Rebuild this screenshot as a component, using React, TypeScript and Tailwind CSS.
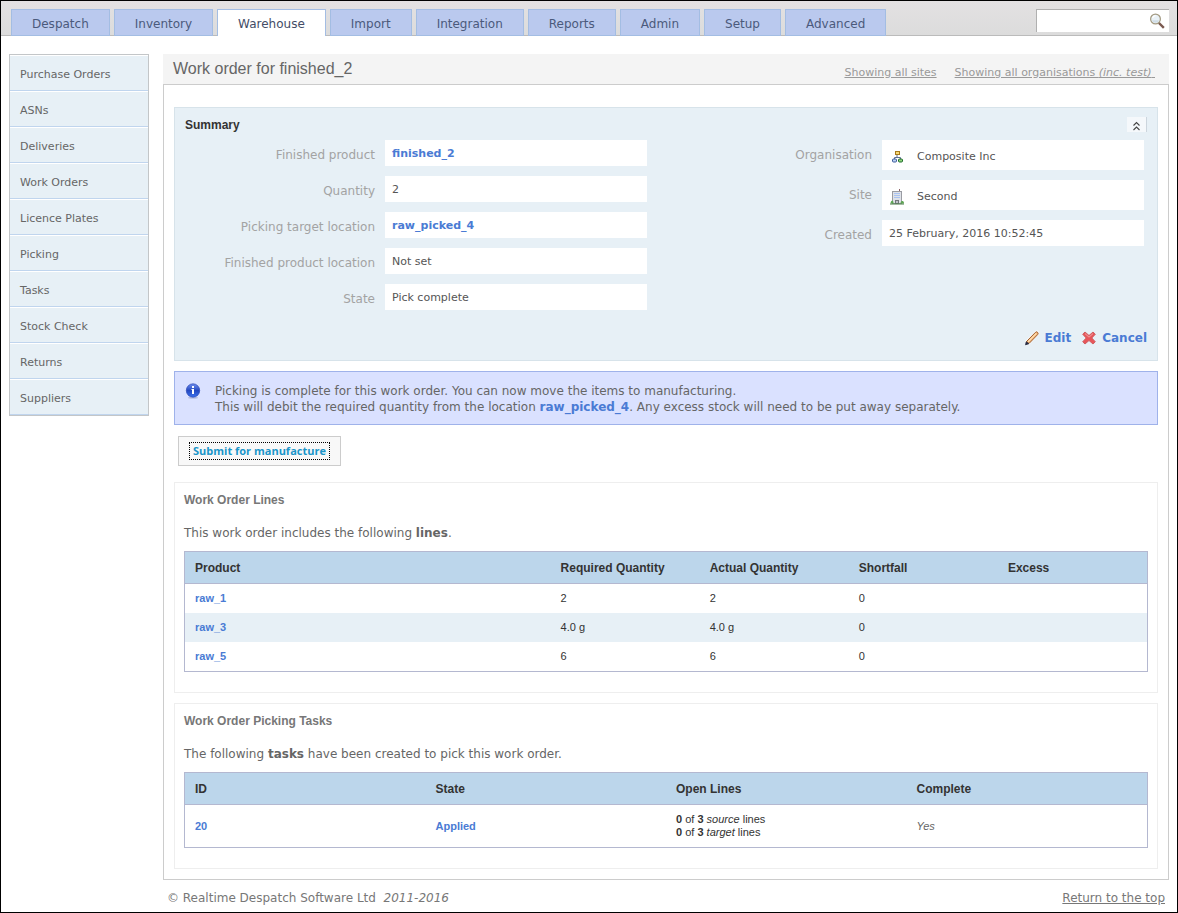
import type { ReactNode } from "react";

const tabs = [
  "Despatch",
  "Inventory",
  "Warehouse",
  "Import",
  "Integration",
  "Reports",
  "Admin",
  "Setup",
  "Advanced",
];

const menu = [
  "Purchase Orders",
  "ASNs",
  "Deliveries",
  "Work Orders",
  "Licence Plates",
  "Picking",
  "Tasks",
  "Stock Check",
  "Returns",
  "Suppliers",
];

const lines = [
  { product: "raw_1", required: "2", actual: "2", shortfall: "0", excess: "" },
  { product: "raw_3", required: "4.0 g", actual: "4.0 g", shortfall: "0", excess: "" },
  { product: "raw_5", required: "6", actual: "6", shortfall: "0", excess: "" },
];

function SearchIcon() {
  return (
    <svg width="16" height="16" viewBox="0 0 16 16" aria-hidden="true">
      <path d="M10.500 10.500l3.500 3.500" stroke="#7b5a50" strokeWidth="2.4" strokeLinecap="square" />
      <circle cx="6.500" cy="6" r="4.900" fill="#e9f1f6" stroke="#a39a82" strokeWidth="1.2" />
      <path d="M3 7.200a3.700 3.700 0 0 0 7 0z" fill="#cfdde6" />
      <path d="M3.600 5a3.200 3.200 0 0 1 3-2.300" fill="none" stroke="#fff" strokeWidth="1.2" />
    </svg>
  );
}

function CollapseIcon() {
  return (
    <svg width="9" height="10" viewBox="0 0 9 10" fill="none" stroke="#444" aria-hidden="true">
      <path d="M1.500 4.500l3-3 3 3M1.500 9l3-3 3 3" strokeWidth="1.1" />
    </svg>
  );
}

function OrganisationIcon() {
  return (
    <svg width="16" height="16" viewBox="0 0 16 16" aria-hidden="true">
      <path d="M8 6v3M5.500 11V8.500h6V11" fill="none" stroke="#5d6f92" />
      <rect x="6.500" y="2.500" width="4" height="3" fill="#f6d976" stroke="#a87a1c" />
      <rect x="3.500" y="10" width="4" height="3" rx="1" fill="#bcd0f2" stroke="#3c5c9c" />
      <rect x="9.500" y="10" width="4" height="3" rx="1" fill="#8fd67c" stroke="#1f6b2c" />
    </svg>
  );
}

function SiteIcon() {
  return (
    <svg width="16" height="16" viewBox="0 0 16 16" aria-hidden="true">
      <path d="M10.500 0v3" stroke="#8d6266" />
      <rect x="3.500" y="2.500" width="9" height="12" fill="#dfe2e8" stroke="#9a9ca3" />
      <path d="M5 4.500h6M5 6.500h6M5 8.500h6" stroke="#a9c3f2" />
      <rect x="6.500" y="11.500" width="3" height="3" fill="#bfc2c8" stroke="#74767c" />
      <path d="M1.500 14.500c0-2 1-3 2-3 1 1 1 2 1 3zM11.500 14.500c0-2 1-2.500 2-2.500s1.500 1 1.500 2.500z" fill="#5da653" />
      <path d="M1 15h14" stroke="#4b7d48" />
    </svg>
  );
}

function EditIcon() {
  return (
    <svg width="16" height="16" viewBox="0 0 16 16" aria-hidden="true">
      <path d="M1 15.300V11.500L11.500 1Q13 0 14.500 1.500T15 4.500L5 14.800z" fill="#fff" />
      <path d="M2.500 11.500L11.500 2.300Q12.600 1.200 13.600 2.300T13.700 4.600L5 13.500z" fill="#f3b678" stroke="#9a5a2c" />
      <path d="M4 11.800L12.300 3.400" stroke="#ffe0b5" strokeWidth="1.2" />
      <path d="M2.200 11.800L4.800 13.800 1.500 14.800z" fill="#2a2f4a" stroke="#23283f" strokeWidth=".8" />
    </svg>
  );
}

function CancelIcon() {
  return (
    <svg width="16" height="16" viewBox="0 0 16 16" aria-hidden="true">
      <path
        d="M4 2L8 5.500 12 2 14.300 4.200 10.800 8 14.300 11.800 12 14 8 10.500 4 14 1.700 11.800 5.200 8 1.700 4.200z"
        fill="#e8555a"
        stroke="#cf5f61"
        strokeLinejoin="round"
      />
      <path d="M4 3.600L8 7.200 12 3.600" fill="none" stroke="#f3a0a1" />
    </svg>
  );
}

function InfoIcon() {
  return (
    <svg width="16" height="16" viewBox="0 0 16 16" className="shrink-0" aria-hidden="true">
      <defs>
        <linearGradient id="info" x1="0" y1="0" x2="0" y2="1">
          <stop offset="0" stopColor="#6f8ff0" />
          <stop offset=".5" stopColor="#2448c0" />
          <stop offset="1" stopColor="#3c72ee" />
        </linearGradient>
      </defs>
      <ellipse cx="8" cy="14.800" rx="5" ry="1" fill="#b7bfe0" />
      <circle cx="8" cy="7.500" r="6.700" fill="url(#info)" stroke="#2c48b4" strokeWidth=".7" />
      <path d="M7 3h2v2H7zM6.500 6H9v5H7V7h-.5z" fill="#fff" />
    </svg>
  );
}

function TextLink({ children }: { children: ReactNode }) {
  return (
    <a href="#" className="font-bold text-[#4a7bd4]">
      {children}
    </a>
  );
}

function Field({ label, icon, children }: { label: string; icon?: ReactNode; children: ReactNode }) {
  return (
    <div className="flex gap-[10px]">
      <dt className="w-[190px] pt-[7px] text-right text-[12px] leading-[17px] text-[#a3a3a3]">{label}</dt>
      <dd
        className={
          icon
            ? "flex h-[30px] w-[262px] items-center gap-3 bg-white px-[7px] pt-1 text-[11px] text-[#555]"
            : "flex h-[26px] w-[262px] items-center bg-white px-[7px] pt-[3px] text-[11px] text-[#555]"
        }
      >
        {icon}
        <span>{children}</span>
      </dd>
    </div>
  );
}

function Section({ title, children }: { title: string; children: ReactNode }) {
  return (
    <section className="border border-[#eee] px-[9px] pb-5">
      <h2 className="pt-[9px] font-['Liberation_Sans'] text-[12px] leading-4 font-bold text-[#777]">{title}</h2>
      {children}
    </section>
  );
}

function HeadCell({ children, className }: { children: ReactNode; className?: string }) {
  return (
    <th
      scope="col"
      className={`h-8 border-b border-[#b4b8d0] px-[10px] text-left text-[12px] font-bold ${className ?? ""}`}
    >
      {children}
    </th>
  );
}

export default function App() {
  return (
    <div
      id="top"
      className="min-h-screen border border-black bg-white font-['DejaVu_Sans',sans-serif] text-[12px] text-[#666]"
    >
      <header className="flex h-[35px] items-start justify-between border-b border-[#bbb] bg-linear-to-b from-[#e3e1e2] to-[#dcdcdc] pt-2 pr-2 pl-[10px]">
        <nav className="flex gap-1">
          {tabs.map((tab) => (
            <a
              key={tab}
              href="#"
              className={
                tab === "Warehouse"
                  ? "h-[27px] border border-b-0 border-[#a3bde3] bg-white px-5 pt-[6px] leading-4 text-[#444c66]"
                  : "h-[27px] border border-[#a3bde3] bg-[#bac9ee] px-5 pt-[6px] leading-4 text-[#4b5a7c]"
              }
            >
              {tab}
            </a>
          ))}
        </nav>
        <form className="flex h-[23px] w-[133px] items-center border-t border-l border-[#b0b0b0] bg-white pr-1">
          <input type="search" aria-label="Search" className="h-full min-w-0 flex-1 px-1 outline-none" />
          <button type="button" aria-label="Go">
            <SearchIcon />
          </button>
        </form>
      </header>

      <div className="flex items-start gap-[14px] pt-[18px] pr-2 pl-2">
        <nav className="w-[140px] shrink-0 border border-[#c3c6c8]">
          {menu.map((item) => (
            <a
              key={item}
              href="#"
              className="flex h-9 items-center border-t border-b border-t-white border-b-[#c0d5ee] bg-[#e7f0f6] px-[10px] pt-1 text-[11px]"
            >
              {item}
            </a>
          ))}
        </nav>

        <div className="min-w-0 flex-1">
          <div className="flex h-[30px] justify-between bg-[#f4f4f4] pr-[14px] pl-[10px]">
            <h1 className="font-['Liberation_Sans'] text-[16px] leading-[30px]">Work order for finished_2</h1>
            <div className="flex gap-[18px] pt-[11px] text-[11px] leading-4 text-[#999]">
              <a href="#" className="underline">
                Showing all sites
              </a>
              <a href="#" className="whitespace-pre underline">
                Showing all organisations <i>(inc. test)</i>{" "}
              </a>
            </div>
          </div>

          <main className="flex flex-col border border-[#ccc] px-[10px] pt-[22px] pb-[10px]">
            <section className="border border-[#d7e3ea] bg-[#e7f0f6] px-[10px] pb-[14px]">
              <div className="flex h-8 items-start justify-between pt-[9px]">
                <h2 className="font-['Liberation_Sans'] text-[12px] leading-4 font-bold text-[#333]">Summary</h2>
                <button
                  type="button"
                  aria-label="Collapse summary"
                  className="flex h-[15px] w-5 items-center justify-center border-r border-[#ccd5dd] bg-[#f5f8fb] pt-[3px]"
                >
                  <CollapseIcon />
                </button>
              </div>
              <div className="flex justify-between">
                <dl className="flex flex-col gap-[10px]">
                  <Field label="Finished product">
                    <TextLink>finished_2</TextLink>
                  </Field>
                  <Field label="Quantity">2</Field>
                  <Field label="Picking target location">
                    <TextLink>raw_picked_4</TextLink>
                  </Field>
                  <Field label="Finished product location">Not set</Field>
                  <Field label="State">Pick complete</Field>
                </dl>
                <dl className="flex flex-col gap-[10px] pr-[3px]">
                  <Field label="Organisation" icon={<OrganisationIcon />}>
                    Composite Inc
                  </Field>
                  <Field label="Site" icon={<SiteIcon />}>
                    Second
                  </Field>
                  <Field label="Created">25 February, 2016 10:52:45</Field>
                </dl>
              </div>
              <div className="mt-5 flex justify-end gap-[10px] leading-4">
                <a href="#" className="flex gap-[5px] font-bold text-[#4a7bd4]">
                  <EditIcon />
                  Edit
                </a>
                <a href="#" className="flex gap-[5px] font-bold text-[#4a7bd4]">
                  <CancelIcon />
                  Cancel
                </a>
              </div>
            </section>

            <div className="mt-[10px] flex gap-[14px] border border-[#9fb2ea] bg-[#dae1ff] px-[10px] pt-[11px] pb-[9px] leading-4">
              <InfoIcon />
              <p>
                Picking is complete for this work order. You can now move the items to manufacturing.
                <br />
                This will debit the required quantity from the location <TextLink>raw_picked_4</TextLink>. Any excess
                stock will need to be put away separately.
              </p>
            </div>

            <button
              type="button"
              className="mx-1 mt-[11px] flex h-[30px] items-center self-start border border-[#ccc] bg-[#f8f8f8] px-[10px] font-['Open_Sans'] text-[11px] font-bold text-[#1b95c9]"
            >
              <span className="border border-dotted border-black px-[3px] leading-4">Submit for manufacture</span>
            </button>

            <div className="mt-4 flex flex-col gap-[10px]">
              <Section title="Work Order Lines">
                <p className="mt-4 leading-[18px]">
                  This work order includes the following <b>lines</b>.
                </p>
                <table className="mt-[9px] w-full table-fixed border-separate border-spacing-0 border border-[#b4b8d0] font-['Liberation_Sans'] text-[11px] text-[#333]">
                  <thead className="bg-[#bcd6eb]">
                    <tr>
                      <HeadCell className="w-[38%]">Product</HeadCell>
                      <HeadCell>Required Quantity</HeadCell>
                      <HeadCell>Actual Quantity</HeadCell>
                      <HeadCell>Shortfall</HeadCell>
                      <HeadCell>Excess</HeadCell>
                    </tr>
                  </thead>
                  <tbody>
                    {lines.map((line) => (
                      <tr key={line.product} className="even:bg-[#e7f0f6]">
                        <td className="h-[29px] px-[10px]">
                          <TextLink>{line.product}</TextLink>
                        </td>
                        <td className="px-[10px]">{line.required}</td>
                        <td className="px-[10px]">{line.actual}</td>
                        <td className="px-[10px]">{line.shortfall}</td>
                        <td className="px-[10px]">{line.excess}</td>
                      </tr>
                    ))}
                  </tbody>
                </table>
              </Section>

              <Section title="Work Order Picking Tasks">
                <p className="mt-4 leading-[18px]">
                  The following <b>tasks</b> have been created to pick this work order.
                </p>
                <table className="mt-[9px] w-full table-fixed border-separate border-spacing-0 border border-[#b4b8d0] font-['Liberation_Sans'] text-[11px] text-[#333]">
                  <thead className="bg-[#bcd6eb]">
                    <tr>
                      <HeadCell>ID</HeadCell>
                      <HeadCell>State</HeadCell>
                      <HeadCell>Open Lines</HeadCell>
                      <HeadCell>Complete</HeadCell>
                    </tr>
                  </thead>
                  <tbody>
                    <tr>
                      <td className="h-[42px] px-[10px]">
                        <TextLink>20</TextLink>
                      </td>
                      <td className="px-[10px]">
                        <TextLink>Applied</TextLink>
                      </td>
                      <td className="px-[10px] leading-[13px]">
                        <b>0</b> of <b>3</b> <i>source</i> lines
                        <br />
                        <b>0</b> of <b>3</b> <i>target</i> lines
                      </td>
                      <td className="px-[10px] text-[#666] italic">Yes</td>
                    </tr>
                  </tbody>
                </table>
              </Section>
            </div>
          </main>

          <footer className="flex justify-between px-1 pt-[10px] pb-1 leading-4 text-[#777]">
            <p className="whitespace-pre">
              © Realtime Despatch Software Ltd <i> 2011-2016</i>
            </p>
            <a href="#top" className="underline">
              Return to the top
            </a>
          </footer>
        </div>
      </div>
    </div>
  );
}
